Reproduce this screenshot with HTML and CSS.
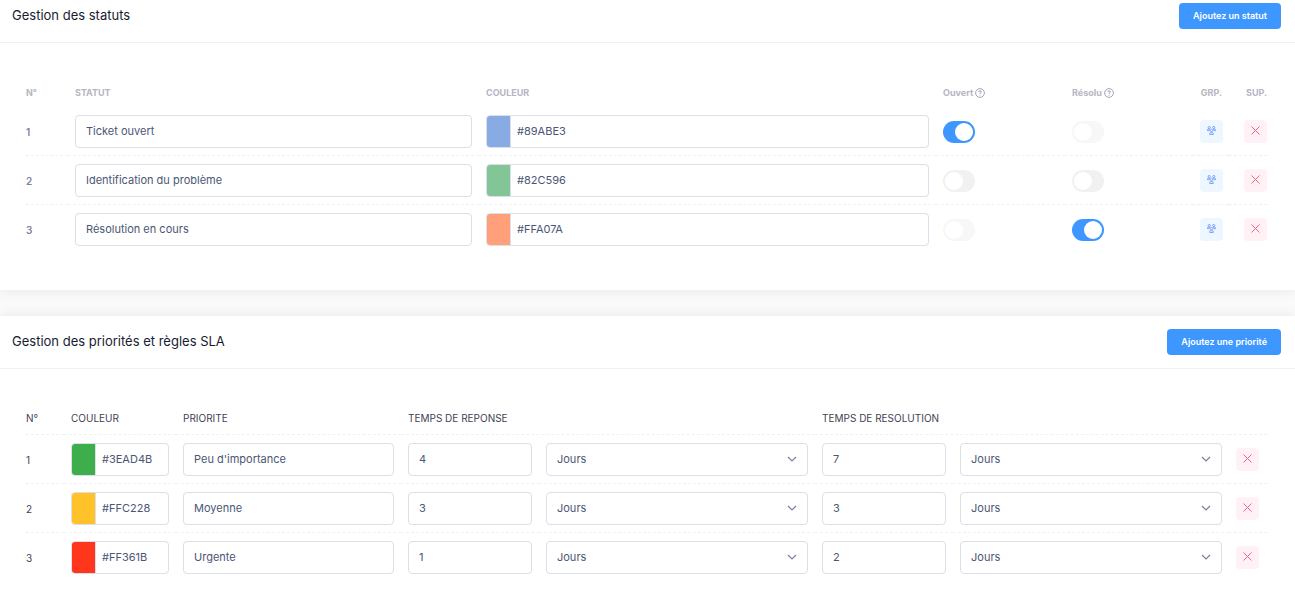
FILE: index.html
```html
<!DOCTYPE html>
<html lang="fr">
<head>
<meta charset="utf-8">
<title>Gestion des statuts</title>
<link rel="stylesheet" href="styles.css">
</head>
<body>
<svg class="sprite" aria-hidden="true">
  <symbol id="cross" viewBox="0 0 9 9"><path d="M.5.5l8 8M8.5.5l-8 8"/></symbol>
  <symbol id="chevron" viewBox="0 0 10 6"><path d="M1 1l4 4 4-4"/></symbol>
  <symbol id="group" viewBox="0 0 10 10"><circle cx="2.5" cy="1.7" r="1.2"/><circle cx="7.5" cy="1.7" r="1.2"/><path d="M.5 5.2V4.4Q.5 3.6 1.4 3.6H3.4M9.5 5.2V4.4Q9.5 3.6 8.6 3.6H6.6M.5 5.2H3M9.5 5.2H7"/><circle cx="5" cy="5" r="1.3"/><path d="M3 9.4V8.4Q3 7.4 4 7.4H6Q7 7.4 7 8.4V9.4Z"/></symbol>
  <symbol id="help" viewBox="0 0 10 10"><circle cx="5" cy="5" r="4.4"/><path d="M3.7 4Q3.7 2.8 5 2.8T6.3 4Q6.3 4.7 5 5.3V5.9M5 6.8V7.6"/></symbol>
</svg>
<main class="page">
  <section class="card">
    <header class="card-header">
      <h2 class="card-title">Gestion des statuts</h2>
      <button class="btn" type="button">Ajoutez un statut</button>
    </header>
    <div class="card-body">
      <table class="table table-muted">
        <colgroup><col class="w-42"><col class="w-411"><col class="w-457"><col class="w-129"><col class="w-128"><col class="w-36"><col class="w-38"></colgroup>
        <thead>
          <tr><th>N°</th><th>STATUT</th><th>COULEUR</th><th>Ouvert <svg class="help"><use href="#help"/></svg></th><th>Résolu <svg class="help"><use href="#help"/></svg></th><th class="end">GRP.</th><th class="end">SUP.</th></tr>
        </thead>
        <tbody>
          <tr>
            <td>1</td>
            <td><input class="field" type="text" aria-label="Statut 1" value="Ticket ouvert"></td>
            <td><div class="color-field"><input class="swatch" type="color" aria-label="Choisir la couleur 1" value="#89ABE3"><input class="color-text" type="text" aria-label="Couleur 1" value="#89ABE3"></div></td>
            <td><input class="switch" type="checkbox" aria-label="Ouvert 1" checked></td>
            <td><input class="switch" type="checkbox" aria-label="Résolu 1" disabled></td>
            <td class="end"><button class="icon-btn icon-btn-blue" type="button" aria-label="Groupes 1"><svg><use href="#group"/></svg></button></td>
            <td class="end"><button class="icon-btn icon-btn-red" type="button" aria-label="Supprimer 1"><svg><use href="#cross"/></svg></button></td>
          </tr>
          <tr>
            <td>2</td>
            <td><input class="field" type="text" aria-label="Statut 2" value="Identification du problème"></td>
            <td><div class="color-field"><input class="swatch" type="color" aria-label="Choisir la couleur 2" value="#82C596"><input class="color-text" type="text" aria-label="Couleur 2" value="#82C596"></div></td>
            <td><input class="switch" type="checkbox" aria-label="Ouvert 2"></td>
            <td><input class="switch" type="checkbox" aria-label="Résolu 2"></td>
            <td class="end"><button class="icon-btn icon-btn-blue" type="button" aria-label="Groupes 2"><svg><use href="#group"/></svg></button></td>
            <td class="end"><button class="icon-btn icon-btn-red" type="button" aria-label="Supprimer 2"><svg><use href="#cross"/></svg></button></td>
          </tr>
          <tr>
            <td>3</td>
            <td><input class="field" type="text" aria-label="Statut 3" value="Résolution en cours"></td>
            <td><div class="color-field"><input class="swatch" type="color" aria-label="Choisir la couleur 3" value="#FFA07A"><input class="color-text" type="text" aria-label="Couleur 3" value="#FFA07A"></div></td>
            <td><input class="switch" type="checkbox" aria-label="Ouvert 3" disabled></td>
            <td><input class="switch" type="checkbox" aria-label="Résolu 3" checked></td>
            <td class="end"><button class="icon-btn icon-btn-blue" type="button" aria-label="Groupes 3"><svg><use href="#group"/></svg></button></td>
            <td class="end"><button class="icon-btn icon-btn-red" type="button" aria-label="Supprimer 3"><svg><use href="#cross"/></svg></button></td>
          </tr>
        </tbody>
      </table>
    </div>
  </section>

  <section class="card">
    <header class="card-header">
      <h2 class="card-title">Gestion des priorités et règles SLA</h2>
      <button class="btn" type="button">Ajoutez une priorité</button>
    </header>
    <div class="card-body">
      <table class="table table-dark">
        <colgroup><col class="w-38"><col class="w-112"><col class="w-225"><col class="w-138"><col class="w-276"><col class="w-138"><col class="w-276"><col class="w-38"></colgroup>
        <thead>
          <tr><th>N°</th><th>COULEUR</th><th>PRIORITE</th><th colspan="2">TEMPS DE REPONSE</th><th colspan="2">TEMPS DE RESOLUTION</th><th></th></tr>
        </thead>
        <tbody>
          <tr>
            <td>1</td>
            <td><div class="color-field"><input class="swatch" type="color" aria-label="Choisir la couleur de priorité 1" value="#3EAD4B"><input class="color-text" type="text" aria-label="Couleur de priorité 1" value="#3EAD4B"></div></td>
            <td><input class="field" type="text" aria-label="Priorité 1" value="Peu d'importance"></td>
            <td><input class="field" type="text" aria-label="Temps de réponse 1" value="4"></td>
            <td><div class="select"><select class="field" aria-label="Unité de réponse 1"><option>Jours</option></select><svg><use href="#chevron"/></svg></div></td>
            <td><input class="field" type="text" aria-label="Temps de résolution 1" value="7"></td>
            <td><div class="select"><select class="field" aria-label="Unité de résolution 1"><option>Jours</option></select><svg><use href="#chevron"/></svg></div></td>
            <td><button class="icon-btn icon-btn-red" type="button" aria-label="Supprimer la priorité 1"><svg><use href="#cross"/></svg></button></td>
          </tr>
          <tr>
            <td>2</td>
            <td><div class="color-field"><input class="swatch" type="color" aria-label="Choisir la couleur de priorité 2" value="#FFC228"><input class="color-text" type="text" aria-label="Couleur de priorité 2" value="#FFC228"></div></td>
            <td><input class="field" type="text" aria-label="Priorité 2" value="Moyenne"></td>
            <td><input class="field" type="text" aria-label="Temps de réponse 2" value="3"></td>
            <td><div class="select"><select class="field" aria-label="Unité de réponse 2"><option>Jours</option></select><svg><use href="#chevron"/></svg></div></td>
            <td><input class="field" type="text" aria-label="Temps de résolution 2" value="3"></td>
            <td><div class="select"><select class="field" aria-label="Unité de résolution 2"><option>Jours</option></select><svg><use href="#chevron"/></svg></div></td>
            <td><button class="icon-btn icon-btn-red" type="button" aria-label="Supprimer la priorité 2"><svg><use href="#cross"/></svg></button></td>
          </tr>
          <tr>
            <td>3</td>
            <td><div class="color-field"><input class="swatch" type="color" aria-label="Choisir la couleur de priorité 3" value="#FF361B"><input class="color-text" type="text" aria-label="Couleur de priorité 3" value="#FF361B"></div></td>
            <td><input class="field" type="text" aria-label="Priorité 3" value="Urgente"></td>
            <td><input class="field" type="text" aria-label="Temps de réponse 3" value="1"></td>
            <td><div class="select"><select class="field" aria-label="Unité de réponse 3"><option>Jours</option></select><svg><use href="#chevron"/></svg></div></td>
            <td><input class="field" type="text" aria-label="Temps de résolution 3" value="2"></td>
            <td><div class="select"><select class="field" aria-label="Unité de résolution 3"><option>Jours</option></select><svg><use href="#chevron"/></svg></div></td>
            <td><button class="icon-btn icon-btn-red" type="button" aria-label="Supprimer la priorité 3"><svg><use href="#cross"/></svg></button></td>
          </tr>
        </tbody>
      </table>
    </div>
  </section>
</main>
</body>
</html>
```
FILE: styles.css
```css
*, *::before, *::after { box-sizing: border-box; }

body {
  margin: 0;
  background: #fafafa;
  color: #3f4254;
  font-family: Inter, "Liberation Sans", sans-serif;
  font-size: 11px;
}

button, input, select { font: inherit; color: inherit; }

.sprite { display: none; }

.page {
  display: flex;
  flex-direction: column;
  gap: 26px;
  margin-top: -10px;
}

.card {
  background: #fff;
  box-shadow: 0 0 14px rgba(0, 0, 0, .08);
}

.card-header {
  display: flex;
  align-items: center;
  justify-content: space-between;
  padding: 13px 14px 13px 12px;
  border-bottom: 1px solid #eff0f2;
}

.card-title {
  margin: 0;
  padding-bottom: 2px;
  color: #181c32;
  font-size: 13px;
  font-weight: 400;
  line-height: 24px;
}

.btn {
  padding: 0 14px;
  border: 0;
  border-radius: 4px;
  background: #3e97ff;
  color: #fff;
  font-size: 9px;
  font-weight: 600;
  line-height: 26px;
}

.card-body { padding: 36px 28px 36px 26px; }

.table {
  width: 100%;
  table-layout: fixed;
  border-collapse: separate;
  border-spacing: 0;
}

.w-36 { width: 36px; }
.w-38 { width: 38px; }
.w-42 { width: 42px; }
.w-112 { width: 112px; }
.w-128 { width: 128px; }
.w-129 { width: 129px; }
.w-138 { width: 138px; }
.w-225 { width: 225px; }
.w-276 { width: 276px; }
.w-411 { width: 411px; }
.w-457 { width: 457px; }

.table th {
  padding: 0 7px;
  text-align: left;
  white-space: nowrap;
  line-height: 28px;
}

.table td {
  padding: 8px 7px 7px;
  border-bottom: 1px dashed #eff0f2;
  vertical-align: middle;
}

.table tr > :first-child { padding-left: 0; }
.table tr > :last-child { padding-right: 0; }
.table .end { text-align: right; }
.table tbody tr:last-child td { border-bottom-color: transparent; }

.table-muted th {
  color: #b5b5c3;
  font-size: 9px;
  font-weight: 700;
}

.table-muted td { color: #7e8299; font-size: 10px; font-weight: 600; }

.table-dark th {
  padding-bottom: 3px;
  border-bottom: 1px dashed #eff0f2;
  font-size: 10px;
  font-weight: 400;
  line-height: 26px;
}

.table-dark td { font-size: 10px; }

.help {
  width: 10px;
  height: 10px;
  vertical-align: -2px;
  fill: none;
  stroke: #a1a5b7;
}

.field, .color-field {
  width: 100%;
  height: 33px;
  border: 1px solid #dbdfe9;
  border-radius: 4px;
  background: #fff;
}

.field, .color-text {
  color: #4b5675;
  font-size: 11px;
  font-weight: 400;
  outline: 0;
}

.field { display: block; padding: 0 10px 2px; }

.color-field { display: flex; overflow: hidden; }

.swatch {
  flex: none;
  width: 24px;
  height: 100%;
  padding: 0;
  border: 0;
  border-right: 1px solid #dbdfe9;
  background: none;
}

.swatch::-webkit-color-swatch-wrapper { padding: 0; }
.swatch::-webkit-color-swatch { border: 0; border-radius: 0; }

.color-text {
  flex: 1;
  min-width: 0;
  padding: 0 6px 2px;
  border: 0;
  background: none;
}

.select { position: relative; }
.select .field { appearance: none; }

.select svg {
  position: absolute;
  top: 13px;
  right: 11px;
  width: 10px;
  height: 6px;
  fill: none;
  stroke: #78829d;
  stroke-width: 1.2;
  pointer-events: none;
}

.switch {
  display: block;
  appearance: none;
  width: 32px;
  height: 22px;
  margin: 0;
  padding: 2px;
  border-radius: 11px;
  background: #f1f1f2;
}

.switch::before {
  content: "";
  display: block;
  width: 18px;
  height: 18px;
  border-radius: 50%;
  background: #fff;
}

.switch:checked { background: #3e97ff; }
.switch:checked::before { margin-left: auto; }
.switch:disabled { opacity: .5; }

.icon-btn {
  display: inline-grid;
  place-items: center;
  width: 23px;
  height: 23px;
  padding: 0 0 2px;
  border: 0;
  border-radius: 4px;
  vertical-align: middle;
}

.icon-btn svg { width: 9px; height: 9px; fill: none; }
.icon-btn-blue { background: #eef6ff; }
.icon-btn-blue svg { stroke: #6f9bfa; stroke-width: 1; }
.icon-btn-red { background: #fff1f5; }
.icon-btn-red svg { stroke: #f1647f; stroke-width: 1; }
```
